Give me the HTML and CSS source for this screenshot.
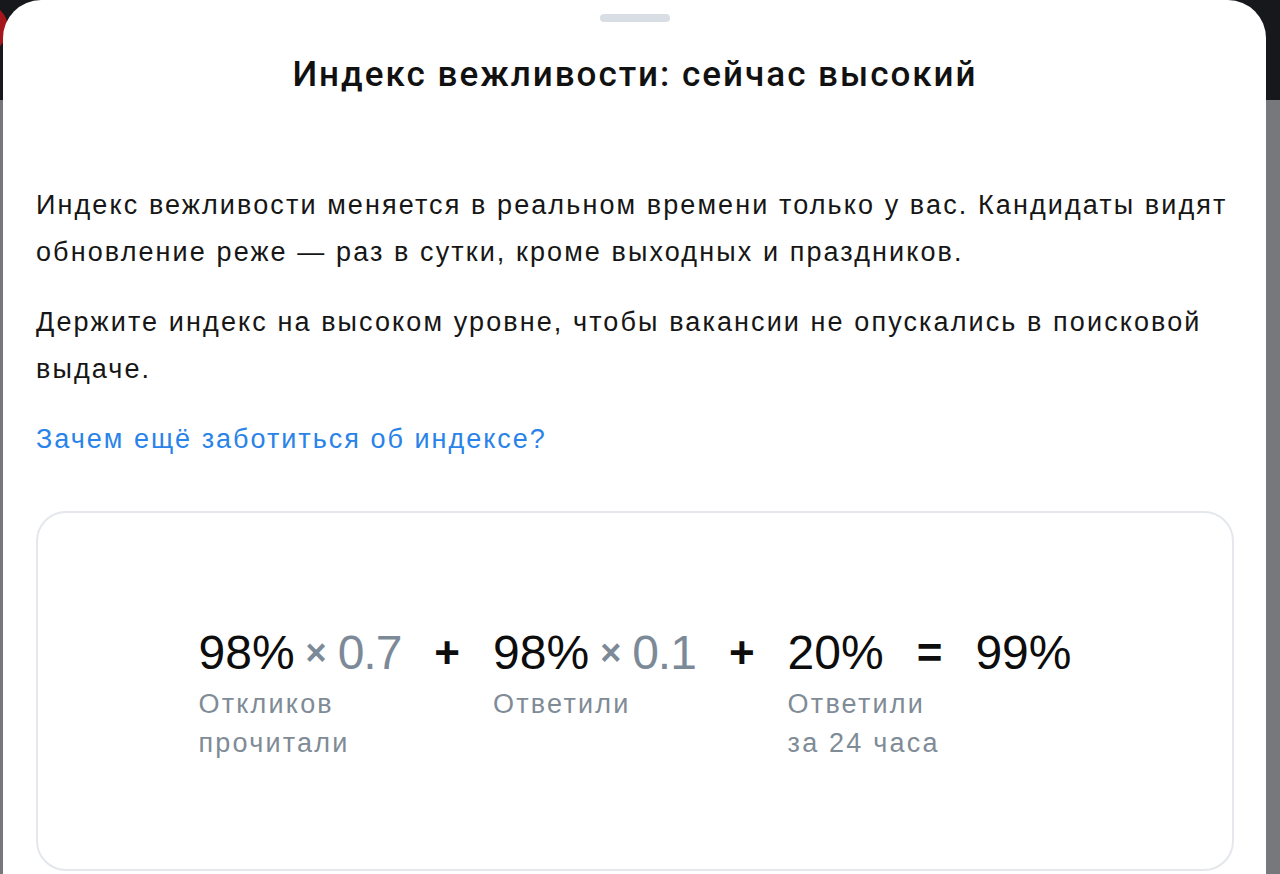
FILE: index.html
```html
<!DOCTYPE html>
<html lang="ru">
<head>
    <meta charset="UTF-8">
    <meta name="viewport" content="width=device-width, initial-scale=1.0">
    <title>Индекс вежливости</title>
    <link rel="stylesheet" href="styles.css">
</head>
<body>
    <div class="backdrop-dot"></div>

    <div class="sheet">
        <div class="grabber"></div>
        <h1>Индекс вежливости: сейчас высокий</h1>

        <div class="text">
            <p>Индекс вежливости меняется в реальном времени только у вас. Кандидаты видят обновление реже — раз в сутки, кроме выходных и праздников.</p>
            <p>Держите индекс на высоком уровне, чтобы вакансии не опускались в поисковой выдаче.</p>
        </div>

        <a class="more-link" href="#">Зачем ещё заботиться об индексе?</a>

        <div class="formula-card">
            <div class="formula">
                <div class="term">
                    <div class="value">98%<span class="times">×</span><span class="weight">0.7</span></div>
                    <div class="caption">Откликов<br>прочитали</div>
                </div>
                <div class="op">+</div>
                <div class="term">
                    <div class="value">98%<span class="times">×</span><span class="weight">0.1</span></div>
                    <div class="caption">Ответили</div>
                </div>
                <div class="op">+</div>
                <div class="term">
                    <div class="value">20%</div>
                    <div class="caption">Ответили<br>за 24 часа</div>
                </div>
                <div class="op">=</div>
                <div class="term">
                    <div class="value">99%</div>
                </div>
            </div>
        </div>
    </div>
</body>
</html>
```

FILE: styles.css
```css
html, body {
    margin: 0;
    height: 100%;
}
body {
    font-family: "Liberation Sans", Arial, sans-serif;
    background: linear-gradient(#16181b 0, #16181b 100px, #76787b 100px);
    overflow: hidden;
    position: relative;
}
.backdrop-dot {
    position: absolute;
    left: -40px;
    top: 4px;
    width: 48px;
    height: 48px;
    border-radius: 50%;
    background: #a5161c;
}
.sheet {
    position: relative;
    margin: 0 14px 0 3px;
    height: 100%;
    background: #fff;
    border-radius: 38px 38px 0 0;
    padding: 0 32px 0 33px;
}
.grabber {
    width: 70px;
    height: 8px;
    margin: 0 auto;
    position: relative;
    top: 14px;
    border-radius: 4px;
    background: #d9dee5;
}
h1 {
    margin: 0;
    padding-top: 43px;
    text-align: center;
    font-family: Roboto, "Liberation Sans", sans-serif;
    font-size: 35px;
    font-weight: 500;
    letter-spacing: 2px;
    color: #111;
    line-height: 48px;
}
.text {
    margin-top: 83px;
}
.text p {
    margin: 0 0 23px;
    font-size: 27px;
    line-height: 47px;
    color: #161616;
    letter-spacing: 2.1px;
}
.more-link {
    display: inline-block;
    margin-top: 0;
    font-size: 27px;
    line-height: 47px;
    color: #2a83e8;
    text-decoration: none;
    letter-spacing: 2px;
}
.formula-card {
    margin-top: 48px;
    border: 2px solid #e4e7eb;
    border-radius: 30px;
    height: 360px;
    padding-top: 112px;
    box-sizing: border-box;
}
.formula {
    display: flex;
    justify-content: center;
    gap: 33px;
}
.value {
    height: 56px;
    font-size: 48px;
    line-height: 56px;
    color: #0d0d0d;
    white-space: nowrap;
}
.times {
    margin: 0 11px;
    font-size: 36px;
    line-height: 0;
    font-weight: 700;
    color: #7c8a98;
    vertical-align: 4px;
}
.weight {
    color: #7c8a98;
    letter-spacing: -1px;
}
.op {
    font-size: 44px;
    line-height: 56px;
    font-weight: 700;
    color: #0d0d0d;
}
.caption {
    width: 0;
    margin-top: 4px;
    white-space: nowrap;
    font-size: 27px;
    line-height: 39px;
    color: #7f8b96;
    letter-spacing: 2.2px;
}
```
